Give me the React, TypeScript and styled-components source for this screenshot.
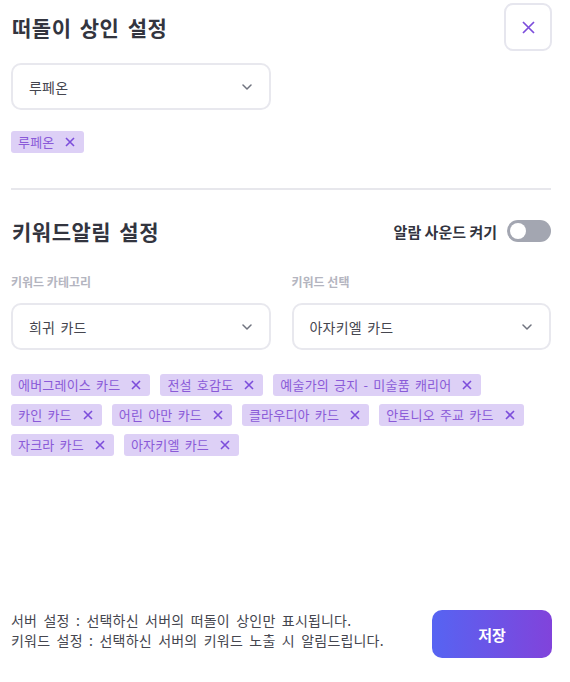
import React from "react";
import styled, { createGlobalStyle } from "styled-components";

const Global = createGlobalStyle`
  html, body { margin: 0; padding: 0; background: #fff; }
  body { font-family: "Noto Sans CJK KR", "Noto Sans", sans-serif; color: #3a3c47; }
  * { box-sizing: border-box; }
`;

const Page = styled.div`
  min-height: 100vh;
  display: flex;
  flex-direction: column;
  padding: 3px 19px 24px 11px;
`;

const Header = styled.div`
  display: flex;
  align-items: center;
  justify-content: space-between;
  height: 48px;
`;

const Title = styled.h1`
  margin: 0 0 0 1px;
  font-size: 21px;
  font-weight: 700;
  color: #33353f;
  letter-spacing: 0.5px;
  word-spacing: 3px;
`;

const CloseButton = styled.button`
  width: 48px;
  height: 48px;
  border: 2px solid #e6e6ee;
  border-radius: 9px;
  background: #fff;
  display: flex;
  align-items: center;
  justify-content: center;
  padding: 0;
  margin-right: -1px;
`;

const Grid = styled.div<{ $mt?: number }>`
  display: grid;
  grid-template-columns: 1fr 1fr;
  column-gap: 21px;
  margin-top: ${(p) => p.$mt ?? 0}px;
`;

const Field = styled.div`
  display: flex;
  flex-direction: column;
`;

const Label = styled.div`
  font-size: 12px;
  font-weight: 700;
  color: #b4b5c0;
  height: 22px;
  line-height: 22px;
  margin-bottom: 10px;
`;

const Select = styled.div`
  height: 47px;
  border: 2px solid #e8e8ee;
  border-radius: 10px;
  display: flex;
  align-items: center;
  justify-content: space-between;
  padding: 0 17px 0 16px;
  font-size: 14px;
  letter-spacing: 0.2px;
  word-spacing: 2px;
  color: #45464f;
`;

const Tags = styled.div<{ $mt: number }>`
  display: flex;
  flex-wrap: wrap;
  gap: 8px 10px;
  margin-top: ${(p) => p.$mt}px;
`;

const Tag = styled.div`
  height: 22px;
  display: inline-flex;
  align-items: center;
  gap: 11px;
  padding: 0 9px 0 7px;
  background: #ddd0f6;
  border-radius: 3px;
  color: #8a5ad8;
  font-size: 13px;
  letter-spacing: 0.2px;
  word-spacing: 2px;
  line-height: 22px;
`;

const Divider = styled.hr`
  border: 0;
  height: 2px;
  background: #e7e7ec;
  margin: 35px 0 0;
`;

const SectionHeader = styled.div`
  display: flex;
  align-items: center;
  justify-content: space-between;
  margin-top: 28px;
  height: 26px;
`;

const ToggleWrap = styled.label`
  display: flex;
  align-items: center;
  gap: 10px;
  font-size: 15px;
  font-weight: 700;
  color: #33353f;
`;

const Toggle = styled.div`
  width: 44px;
  height: 22px;
  border-radius: 11px;
  background: #a3a6b1;
  position: relative;
  &::after {
    content: "";
    position: absolute;
    left: 3px;
    top: 3px;
    width: 16px;
    height: 16px;
    border-radius: 50%;
    background: #fff;
  }
`;

const Footer = styled.div`
  margin-top: auto;
  display: flex;
  align-items: flex-start;
  justify-content: space-between;
`;

const Notes = styled.div`
  font-size: 14px;
  line-height: 20px;
  letter-spacing: 0.2px;
  word-spacing: 3px;
  color: #45464f;
`;

const SaveButton = styled.button`
  width: 120px;
  height: 48px;
  border: 0;
  border-radius: 10px;
  background: linear-gradient(90deg, #5664f2 0%, #8143db 100%);
  color: #fff;
  font-family: inherit;
  font-size: 15px;
  font-weight: 700;
  margin-right: -1px;
`;

const Chevron = () => (
  <svg width="10" height="6" viewBox="0 0 10 6" fill="none">
    <path d="M1 1l4 4 4-4" stroke="#70737f" strokeWidth="1.5" strokeLinecap="round" strokeLinejoin="round" />
  </svg>
);

const SmallX = () => (
  <svg width="10" height="10" viewBox="0 0 10 10" fill="none">
    <path d="M1 1l8 8M9 1L1 9" stroke="#7c4ddb" strokeWidth="1.6" />
  </svg>
);

const BigX = () => (
  <svg width="13" height="13" viewBox="0 0 13 13" fill="none">
    <path d="M1 1l11 11M12 1L1 12" stroke="#7c4ddb" strokeWidth="1.7" />
  </svg>
);

const keywords = [
  "에버그레이스 카드",
  "전설 호감도",
  "예술가의 긍지 - 미술품 캐리어",
  "카인 카드",
  "어린 아만 카드",
  "클라우디아 카드",
  "안토니오 주교 카드",
  "자크라 카드",
  "아자키엘 카드",
];

export default function App() {
  return (
    <>
      <Global />
      <Page>
        <Header>
          <Title>떠돌이 상인 설정</Title>
          <CloseButton aria-label="닫기">
            <BigX />
          </CloseButton>
        </Header>

        <Grid $mt={12}>
          <Select>
            <span>루페온</span>
            <Chevron />
          </Select>
        </Grid>

        <Tags $mt={21}>
          <Tag>
            루페온
            <SmallX />
          </Tag>
        </Tags>

        <Divider />

        <SectionHeader>
          <Title>키워드알림 설정</Title>
          <ToggleWrap>
            알람 사운드 켜기
            <Toggle />
          </ToggleWrap>
        </SectionHeader>

        <Grid $mt={27}>
          <Field>
            <Label>키워드 카테고리</Label>
            <Select>
              <span>희귀 카드</span>
              <Chevron />
            </Select>
          </Field>
          <Field>
            <Label>키워드 선택</Label>
            <Select>
              <span>아자키엘 카드</span>
              <Chevron />
            </Select>
          </Field>
        </Grid>

        <Tags $mt={24}>
          {keywords.map((k) => (
            <Tag key={k}>
              {k}
              <SmallX />
            </Tag>
          ))}
        </Tags>

        <Footer>
          <Notes>
            서버 설정 : 선택하신 서버의 떠돌이 상인만 표시됩니다.
            <br />
            키워드 설정 : 선택하신 서버의 키워드 노출 시 알림드립니다.
          </Notes>
          <SaveButton>저장</SaveButton>
        </Footer>
      </Page>
    </>
  );
}
